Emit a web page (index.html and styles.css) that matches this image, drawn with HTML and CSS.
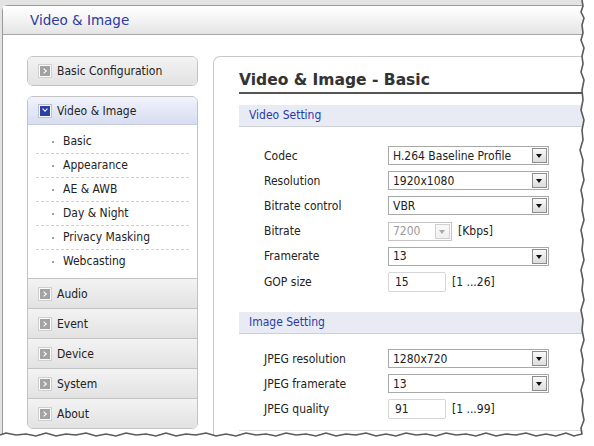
FILE: index.html
```html
<!DOCTYPE html>
<html>
<head>
<meta charset="utf-8">
<link rel="stylesheet" href="styles.css">
</head>
<body>
<div class="screen">
  <div class="window">
    <div class="header">Video &amp; Image</div>
    <div class="main">
      <nav class="sidebar">
        <div class="box">
          <div class="item"><span class="ico"></span>Basic Configuration</div>
        </div>
        <div class="box group">
          <div class="item active"><span class="ico blue"></span>Video &amp; Image</div>
          <ul class="sub">
            <li>Basic</li>
            <li>Appearance</li>
            <li>AE &amp; AWB</li>
            <li>Day &amp; Night</li>
            <li>Privacy Masking</li>
            <li>Webcasting</li>
          </ul>
          <div class="item"><span class="ico"></span>Audio</div>
          <div class="item"><span class="ico"></span>Event</div>
          <div class="item"><span class="ico"></span>Device</div>
          <div class="item"><span class="ico"></span>System</div>
          <div class="item"><span class="ico"></span>About</div>
        </div>
      </nav>
      <section class="content">
        <h1 class="title">Video &amp; Image - Basic</h1>
        <div class="band">Video Setting</div>
        <div class="rows first">
          <div class="row"><span class="lbl">Codec</span><span class="sel">H.264 Baseline Profile<span class="btn"></span></span></div>
          <div class="row"><span class="lbl">Resolution</span><span class="sel">1920x1080<span class="btn"></span></span></div>
          <div class="row"><span class="lbl">Bitrate control</span><span class="sel">VBR<span class="btn"></span></span></div>
          <div class="row"><span class="lbl">Bitrate</span><span class="sel small disabled">7200<span class="btn"></span></span><span class="unit">[Kbps]</span></div>
          <div class="row"><span class="lbl">Framerate</span><span class="sel">13<span class="btn"></span></span></div>
          <div class="row"><span class="lbl">GOP size</span><span class="inp">15</span><span class="unit">[1 ...26]</span></div>
        </div>
        <div class="band">Image Setting</div>
        <div class="rows second">
          <div class="row"><span class="lbl">JPEG resolution</span><span class="sel">1280x720<span class="btn"></span></span></div>
          <div class="row"><span class="lbl">JPEG framerate</span><span class="sel">13<span class="btn"></span></span></div>
          <div class="row"><span class="lbl">JPEG quality</span><span class="inp">91</span><span class="unit">[1 ...99]</span></div>
        </div>
        <div class="endline"></div>
      </section>
    </div>
  </div>
</div>
<svg class="tear" width="594" height="446" viewBox="0 0 594 446">
  <path class="tear-fill" d="M594 0 L582 0 L583 6 L581 12 L584 18 L582 25 L583 33 L581 40 L584 48 L582 56 L583 64 L581 72 L584 80 L582 90 L583 100 L581 110 L584 120 L582 130 L583 140 L580 150 L583 160 L582 170 L584 180 L581 190 L583 200 L582 210 L584 220 L581 230 L583 240 L582 250 L584 260 L581 270 L583 280 L582 290 L584 300 L581 310 L583 320 L582 330 L584 340 L581 350 L583 360 L582 370 L584 380 L581 390 L583 400 L582 410 L584 420 L581 428 L582 434 L574 436 L566 433 L556 436 L546 434 L536 436 L526 433 L516 435 L506 434 L496 436 L486 433 L476 436 L466 434 L456 435 L446 433 L436 436 L426 434 L416 435 L406 433 L396 436 L386 434 L376 436 L366 433 L356 435 L346 434 L336 436 L326 433 L316 436 L306 434 L296 435 L286 433 L276 436 L266 434 L256 435 L246 433 L236 436 L226 434 L216 436 L206 433 L196 435 L186 434 L176 436 L166 433 L156 436 L146 434 L136 435 L126 433 L116 436 L106 434 L96 436 L86 433 L76 435 L66 434 L56 436 L46 433 L36 436 L26 434 L16 435 L6 433 L0 435 L0 446 L594 446 Z"/>
  <path class="tear-line" d="M582 0 L583 6 L581 12 L584 18 L582 25 L583 33 L581 40 L584 48 L582 56 L583 64 L581 72 L584 80 L582 90 L583 100 L581 110 L584 120 L582 130 L583 140 L580 150 L583 160 L582 170 L584 180 L581 190 L583 200 L582 210 L584 220 L581 230 L583 240 L582 250 L584 260 L581 270 L583 280 L582 290 L584 300 L581 310 L583 320 L582 330 L584 340 L581 350 L583 360 L582 370 L584 380 L581 390 L583 400 L582 410 L584 420 L581 428 L582 434 L574 436 L566 433 L556 436 L546 434 L536 436 L526 433 L516 435 L506 434 L496 436 L486 433 L476 436 L466 434 L456 435 L446 433 L436 436 L426 434 L416 435 L406 433 L396 436 L386 434 L376 436 L366 433 L356 435 L346 434 L336 436 L326 433 L316 436 L306 434 L296 435 L286 433 L276 436 L266 434 L256 435 L246 433 L236 436 L226 434 L216 436 L206 433 L196 435 L186 434 L176 436 L166 433 L156 436 L146 434 L136 435 L126 433 L116 436 L106 434 L96 436 L86 433 L76 435 L66 434 L56 436 L46 433 L36 436 L26 434 L16 435 L6 433 L0 435"/>
</svg>
</body>
</html>
```

FILE: styles.css
```css
html, body {
  margin: 0;
  padding: 0;
}
body {
  width: 594px;
  height: 446px;
  overflow: hidden;
  background: #ffffff;
  position: relative;
  font-family: "DejaVu Sans", Verdana, sans-serif;
  font-stretch: condensed;
  font-size: 12px;
  color: #222;
}
.screen {
  width: 594px;
  height: 446px;
  box-sizing: border-box;
  background: #e3e3e3;
  padding: 5px 0 0 2px;
}
.window {
  height: 100%;
  box-sizing: border-box;
  background: #fff;
  border-left: 1px solid #9a9a9a;
  border-top: 1px solid #9a9a9a;
  border-top-left-radius: 6px;
}
.header {
  height: 28px;
  line-height: 29px;
  padding-left: 27px;
  background: linear-gradient(#ffffff, #f3f3f3 50%, #e4e4e4);
  border-bottom: 1px solid #a8a8a8;
  color: #2a3aa6;
  font-size: 13.5px;
  font-stretch: normal;
}
.main {
  display: flex;
  padding: 21px 0 0 24px;
  gap: 15px;
}
.sidebar {
  width: 171px;
  display: flex;
  flex-direction: column;
  gap: 10px;
}
.box {
  border: 1px solid #c3c3c3;
  border-radius: 6px;
  overflow: hidden;
}
.item {
  height: 29px;
  display: flex;
  align-items: center;
  padding-left: 11px;
  background: linear-gradient(#f3f3f3, #e2e2e2);
  color: #222;
  font-size: 12px;
}
.box > .item:only-child {
  height: 28px;
}
.sub + .item,
.group .item + .item {
  border-top: 1px solid #c3c3c3;
}
.item.active {
  height: 27px;
  background: linear-gradient(#f1f3fc, #d7ddf0);
  border-bottom: 1px solid #c8cde0;
}
.ico {
  width: 10px;
  height: 10px;
  border: 1px solid #fbfbfb;
  outline: 1px solid #d0d0d0;
  background: #a2a2a2;
  margin-right: 6px;
  position: relative;
  flex: none;
}
.ico::after {
  content: "";
  position: absolute;
  left: 2px;
  top: 3px;
  width: 3px;
  height: 3px;
  border-right: 1.5px solid #fff;
  border-bottom: 1.5px solid #fff;
  transform: rotate(-45deg);
}
.ico.blue {
  background: #2c3ea8;
  outline-color: #b8c0dc;
}
.ico.blue::after {
  left: 3px;
  top: 1.5px;
  transform: rotate(45deg);
}
.sub {
  list-style: none;
  margin: 0;
  padding: 5px 8px 5px 8px;
  background: #fff;
}
.sub li {
  height: 23px;
  line-height: 23px;
  padding-left: 27px;
  position: relative;
  color: #222;
  font-size: 12px;
}
.sub li + li {
  border-top: 1px dashed #cfcfcf;
}
.sub li::before {
  content: "";
  position: absolute;
  left: 16px;
  top: 11px;
  width: 2px;
  height: 2px;
  background: #a0a0a0;
}
.content {
  flex: 1;
  border-top: 1px solid #c8c8c8;
  border-left: 1px solid #c8c8c8;
  border-top-left-radius: 7px;
  padding-left: 25px;
  height: 400px;
}
.title {
  margin: 14px 0 0 0;
  padding-bottom: 3px;
  font-size: 15.5px;
  font-weight: bold;
  font-stretch: normal;
  color: #333;
  border-bottom: 2px solid #555;
  line-height: 18px;
  text-shadow: 0 0 1px rgba(0,0,0,0.1);
}
.title + .band {
  margin-top: 11px;
}
.band {
  height: 21px;
  line-height: 21px;
  padding-left: 10px;
  background: #e8ebf4;
  border-bottom: 1px solid #cdd0d8;
  color: #2a3aa6;
  font-size: 12px;
}
.rows {
  padding: 16px 0 18px 25px;
}
.rows.second {
  padding-top: 12px;
  padding-bottom: 8px;
}
.row {
  height: 25.2px;
  display: flex;
  align-items: center;
}
.lbl {
  width: 124px;
  flex: none;
  font-size: 12px;
}
.sel {
  height: 17px;
  border: 1px solid #a8a8a8;
  display: flex;
  align-items: center;
  padding-left: 4px;
  box-sizing: content-box;
  width: 155px;
  position: relative;
  font-size: 12px;
}
.sel.small {
  width: 58px;
}
.sel.disabled {
  color: #9a9a9a;
  border-color: #c4c4c4;
}
.btn {
  position: absolute;
  right: 1px;
  top: 1px;
  width: 13px;
  height: 13px;
  border: 1px solid #8c8c8c;
  background: linear-gradient(#fafafa, #dcdcdc);
}
.btn::after {
  content: "";
  position: absolute;
  left: 3px;
  top: 5px;
  border-left: 3.5px solid transparent;
  border-right: 3.5px solid transparent;
  border-top: 4px solid #111;
}
.disabled .btn {
  border-color: #d0d0d0;
  background: linear-gradient(#fafafa, #efefef);
}
.disabled .btn::after {
  border-top-color: #aaa;
}
.unit {
  margin-left: 6px;
  font-size: 12px;
}
.inp {
  width: 50px;
  height: 18px;
  line-height: 18px;
  border: 1px solid #d6d6d6;
  border-radius: 2px;
  padding-left: 6px;
  font-size: 12px;
}
.endline {
  border-top: 1px solid #dcdcdc;
}
.tear {
  position: absolute;
  left: 0;
  top: 0;
}
.tear-fill {
  fill: #fff;
}
.tear-line {
  fill: none;
  stroke: #5a5a5a;
  stroke-width: 1.6;
}
```
